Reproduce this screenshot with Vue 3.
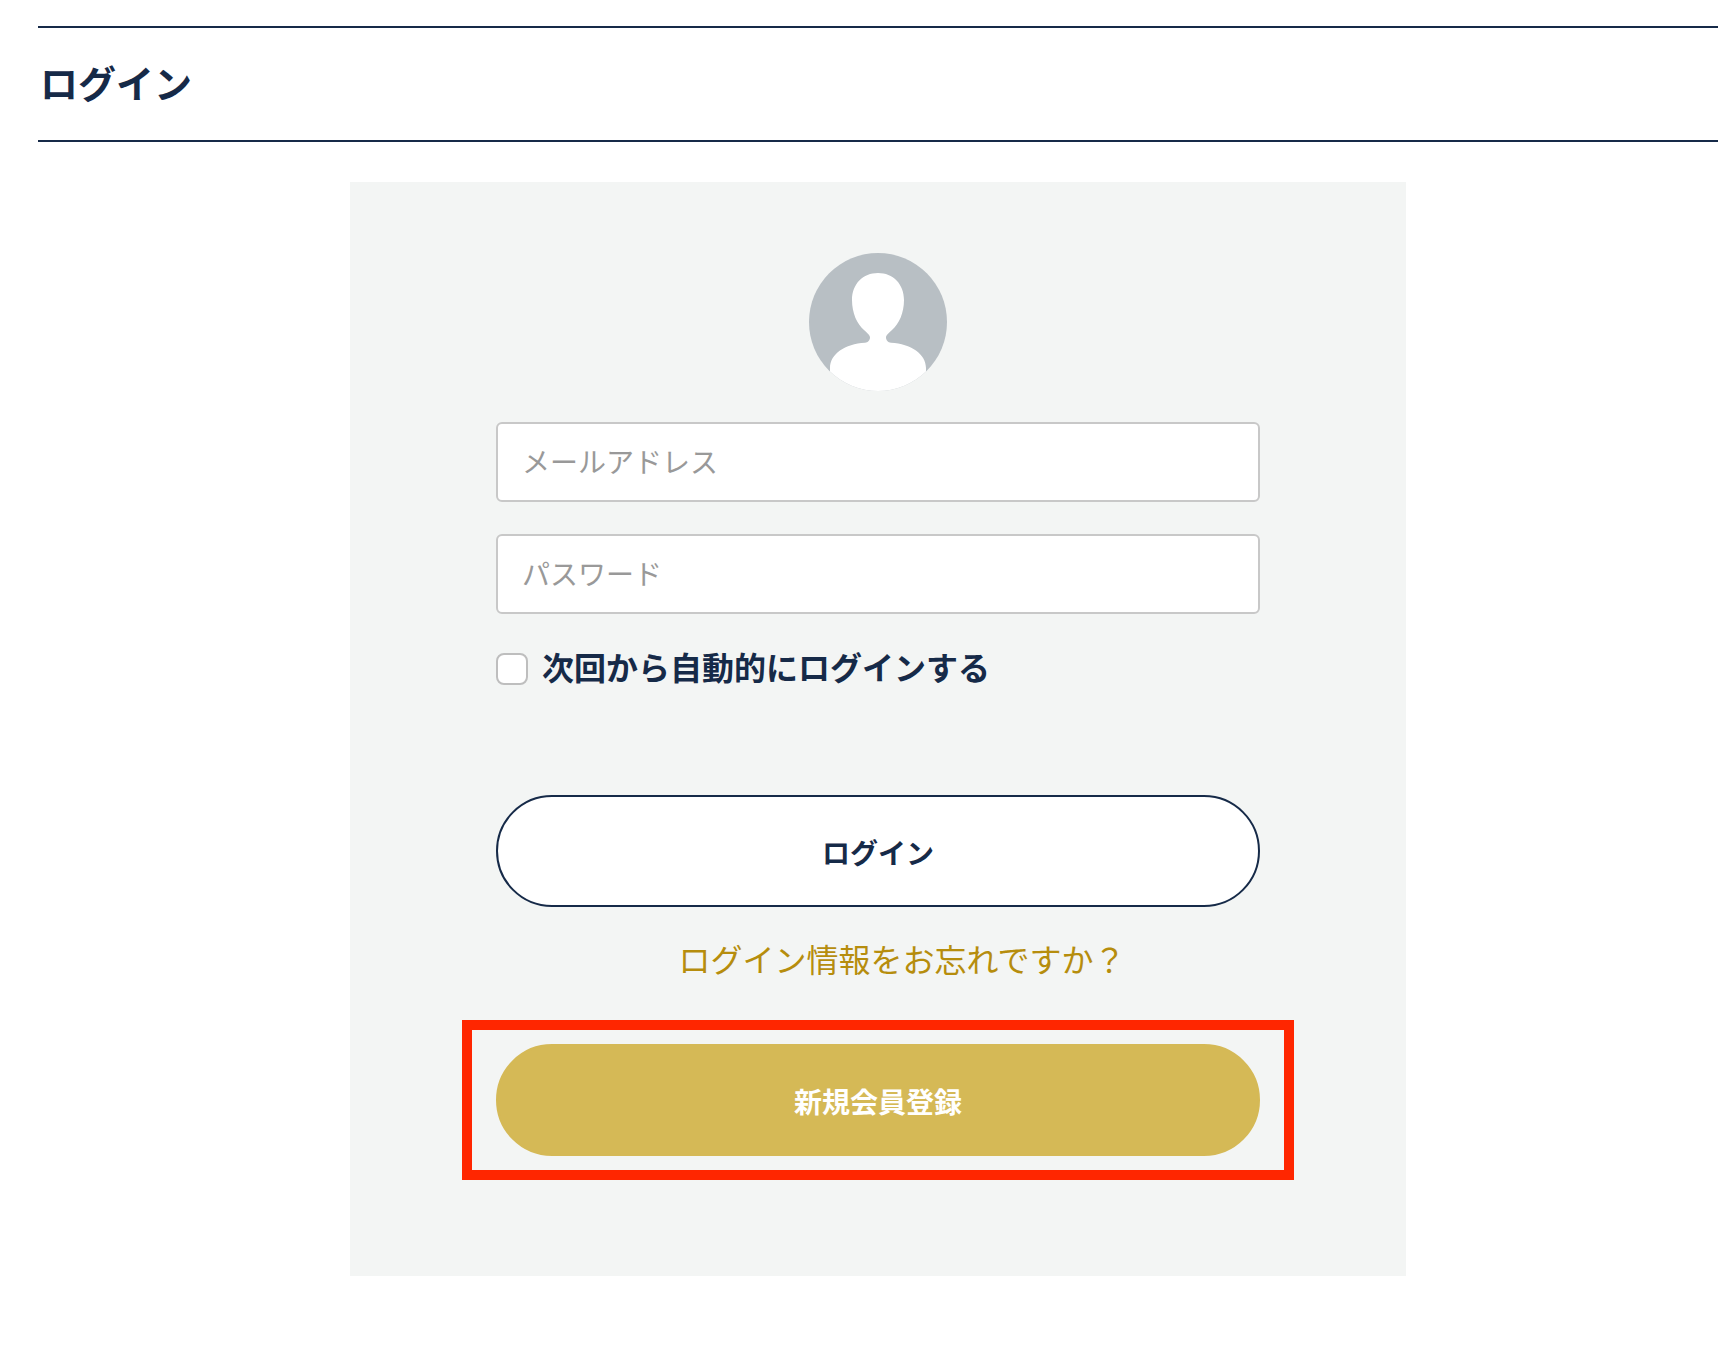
<script setup>
import { ref } from 'vue'

const email = ref('')
const password = ref('')
const remember = ref(false)
</script>

<template>
  <main class="page">
    <header class="page-header">
      <h1>ログイン</h1>
    </header>

    <form class="card" @submit.prevent>
      <svg class="avatar" viewBox="0 0 138 138" aria-hidden="true">
        <defs>
          <clipPath id="avatar-clip"><circle cx="69" cy="69" r="69" /></clipPath>
        </defs>
        <circle cx="69" cy="69" r="69" fill="#b8bfc4" />
        <path
          clip-path="url(#avatar-clip)"
          fill="#fff"
          d="M69 20C54 20 43 31 43 47C43 60 48 71 55 77C58 80 61 82 61 84.500C61 87 59 89.500 56 89.800C36 91 21 101 21 115V138H117V115C117 101 102 91 82 89.800C79 89.500 77 87 77 84.500C77 82 80 80 83 77C90 71 95 60 95 47C95 31 84 20 69 20Z"
        />
      </svg>

      <input v-model="email" class="field" type="email" placeholder="メールアドレス" aria-label="メールアドレス" />
      <input v-model="password" class="field" type="password" placeholder="パスワード" aria-label="パスワード" />

      <label class="remember">
        <input v-model="remember" type="checkbox" />
        <span>次回から自動的にログインする</span>
      </label>

      <button class="pill login" type="submit">ログイン</button>
      <a class="forgot" href="#">ログイン情報をお忘れですか？</a>

      <div class="highlight">
        <button class="pill signup" type="button">新規会員登録</button>
      </div>
    </form>
  </main>
</template>

<style>
body {
  margin: 0;
  background: #fff;
}
</style>

<style scoped>
.page {
  padding: 26px 18px 86px 38px;
  color: #162a48;
  font-family: "Noto Sans CJK JP", sans-serif;
}

.page-header {
  padding: 26px 2px 30px;
  border-top: 2px solid #162a48;
  border-bottom: 2px solid #162a48;
}

h1 {
  margin: 0;
  font-size: 38px;
  font-weight: 700;
  line-height: 56px;
}

.card {
  box-sizing: border-box;
  display: flex;
  flex-direction: column;
  max-width: 1056px;
  margin: 40px auto 0;
  padding: 71px 112px 96px;
  background: #f3f5f4;
}

.avatar {
  width: 138px;
  height: 138px;
  align-self: center;
  margin-bottom: 31px;
}

.field,
.remember,
.login {
  margin-right: 34px;
  margin-left: 34px;
}

.field {
  box-sizing: border-box;
  height: 80px;
  margin-bottom: 32px;
  padding: 0 24px 2px;
  border: 2px solid #c8c8c8;
  border-radius: 6px;
  background: #fff;
  color: #162a48;
  font-family: inherit;
  font-size: 28px;
}

.field::placeholder {
  color: #999;
  opacity: 1;
}

.remember {
  display: flex;
  align-items: center;
  align-self: flex-start;
  gap: 14px;
  font-size: 32px;
  font-weight: 700;
  line-height: 40px;
}

.remember span {
  padding-bottom: 6px;
}

.remember input {
  appearance: none;
  box-sizing: border-box;
  flex: none;
  width: 32px;
  height: 32px;
  margin: 0;
  border: 2px solid #bebebe;
  border-radius: 8px;
  background: #fff;
}

.remember input:checked {
  background: #162a48;
}

.pill {
  box-sizing: border-box;
  height: 112px;
  padding: 2px 24px 0;
  border: 2px solid #162a48;
  border-radius: 56px;
  font-family: inherit;
  font-size: 28px;
  font-weight: 700;
  cursor: pointer;
}

.login {
  margin-top: 103px;
  background: #fff;
  color: #162a48;
}

.forgot {
  align-self: center;
  margin: 27px 0 38px 48px;
  color: #b68d0d;
  font-size: 32px;
  line-height: 48px;
  text-decoration: none;
}

.highlight {
  display: flex;
  padding: 14px 24px;
  border: 10px solid #ff2600;
}

.signup {
  flex: 1;
  border-color: #d5b956;
  background: #d5b956;
  color: #fff;
}
</style>
